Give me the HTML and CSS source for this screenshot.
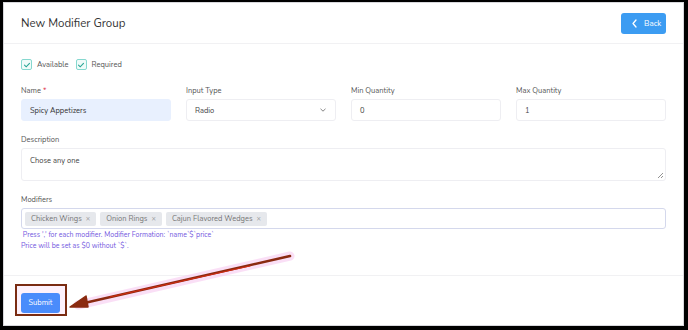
FILE: index.html
```html
<!DOCTYPE html>
<html lang="en">
<head>
    <meta charset="UTF-8">
    <meta name="viewport" content="width=device-width, initial-scale=1.0">
    <title>New Modifier Group</title>
    <link rel="stylesheet" href="styles.css">
</head>
<body>
    <div class="frame">
        <div class="card">
            <div class="card-header">
                <h1>New Modifier Group</h1>
                <button type="button" class="btn-back">
                    <svg width="7" height="9" viewBox="0 0 7 9"><path d="M5 1 L2 4.5 L5 8" fill="none" stroke="#fff" stroke-width="1.3" stroke-linecap="round" stroke-linejoin="round"/></svg>
                    Back
                </button>
            </div>

            <div class="card-body">
                <div class="checks">
                    <label class="check"><span class="box"><svg width="8" height="8" viewBox="0 0 8 8"><path d="M1.5 4.2 L3.2 5.8 L6.5 2.3" fill="none" stroke="#2aa595" stroke-width="1.1" stroke-linecap="round"/></svg></span>Available</label>
                    <label class="check"><span class="box"><svg width="8" height="8" viewBox="0 0 8 8"><path d="M1.5 4.2 L3.2 5.8 L6.5 2.3" fill="none" stroke="#2aa595" stroke-width="1.1" stroke-linecap="round"/></svg></span>Required</label>
                </div>

                <div class="row">
                    <div class="field">
                        <label>Name <span class="req">*</span></label>
                        <div class="input filled">Spicy Appetizers</div>
                    </div>
                    <div class="field">
                        <label>Input Type</label>
                        <div class="input select">Radio
                            <svg width="8" height="6" viewBox="0 0 8 6"><path d="M1.5 1.8 L4 4.2 L6.5 1.8" fill="none" stroke="#777" stroke-width="0.9"/></svg>
                        </div>
                    </div>
                    <div class="field">
                        <label>Min Quantity</label>
                        <div class="input">0</div>
                    </div>
                    <div class="field">
                        <label>Max Quantity</label>
                        <div class="input">1</div>
                    </div>
                </div>

                <div class="field wide">
                    <label>Description</label>
                    <div class="input textarea">Chose any one
                        <svg class="grip" width="7" height="7" viewBox="0 0 7 7"><path d="M6 1 L1 6 M6 4 L4 6" stroke="#777" stroke-width="0.8"/></svg>
                    </div>
                </div>

                <div class="field wide mods">
                    <label>Modifiers</label>
                    <div class="input tags">
                        <span class="tag">Chicken Wings <i>&times;</i></span>
                        <span class="tag">Onion Rings <i>&times;</i></span>
                        <span class="tag">Cajun Flavored Wedges <i>&times;</i></span>
                    </div>
                    <p class="hint">&nbsp;Press ',' for each modifier. Modifier Formation: `name`$`price`</p>
                    <p class="hint">Price will be set as $0 without `$`.</p>
                </div>
            </div>

            <div class="card-footer">
                <div class="mark">
                    <button type="button" class="btn-submit">Submit</button>
                </div>
            </div>

            <!-- annotation arrow drawn over the page -->
            <svg class="arrow" width="688" height="330" viewBox="0 0 688 330">
                <path d="M290 256 L78 305" stroke="#f7c6f0" stroke-width="9" opacity="0.55" stroke-linecap="round"/>
                <path d="M290 256 L80 304" stroke="#8a2a10" stroke-width="2.6" stroke-linecap="round"/>
                <path d="M250 266 L110 297" stroke="#d42a10" stroke-width="1" stroke-linecap="round"/>
                <path d="M70 307 L86 296 L88 307 Z" fill="#8a2a10" stroke="#8a2a10" stroke-width="1.5" stroke-linejoin="round"/>
            </svg>
        </div>
    </div>
</body>
</html>
```

FILE: styles.css
```css
/* Reset */
body, h1, p, button {
    margin: 0;
    padding: 0;
}

body {
    width: 688px;
    height: 330px;
    background: #000;
    font-family: "Nunito", "Lato", sans-serif;
    overflow: hidden;
}

.frame {
    margin: 2px 4px 0 3px;
    height: 324px;
    background: #fff;
    border: 1px solid #d8d8dc;
    box-sizing: border-box;
}

.card {
    position: relative;
    height: 100%;
}

.card-header {
    display: flex;
    justify-content: space-between;
    align-items: center;
    height: 40px;
    padding: 0 17px 0 17px;
    border-bottom: 1px solid #f1f1f3;
}

h1 {
    font-size: 11.5px;
    font-weight: 400;
    color: #333;
    margin-top: -1px;
}

.btn-back {
    display: flex;
    align-items: center;
    gap: 6px;
    width: 45px;
    height: 21px;
    padding-left: 10px;
    border: none;
    border-radius: 3px;
    background: #3c9cf2;
    color: #fff;
    font-family: inherit;
    font-size: 8px;
    margin-top: 1px;
}

.card-body {
    padding: 15px 17px 0 17px;
    height: 232px;
    box-sizing: border-box;
    border-bottom: 1px solid #f1f1f3;
}

.checks {
    display: flex;
    gap: 7px;
    font-size: 7.5px;
    color: #555;
    margin-bottom: 15px;
}

.check {
    display: flex;
    align-items: center;
    gap: 5px;
}

.box {
    display: flex;
    align-items: center;
    justify-content: center;
    width: 9px;
    height: 9px;
    border: 1px solid #86d8cf;
    border-radius: 2px;
    background: #f0fbf9;
}

.row {
    display: grid;
    grid-template-columns: repeat(4, 150px);
    column-gap: 15px;
}

.field label {
    display: block;
    font-size: 7.5px;
    color: #555;
    margin-bottom: 3px;
}

.req {
    color: #e04050;
}

.input {
    position: relative;
    display: flex;
    align-items: center;
    height: 22px;
    box-sizing: border-box;
    padding: 0 8px;
    border: 1px solid #eeeef2;
    border-radius: 3px;
    font-size: 7.5px;
    color: #444;
}

.input.filled {
    background: #e8f0fe;
    border-color: #e8f0fe;
    color: #333;
}

.input.select {
    justify-content: space-between;
}

.wide {
    margin-top: 13px;
}

.input.textarea {
    height: 33px;
    align-items: flex-start;
    padding-top: 6px;
}

.grip {
    position: absolute;
    right: 1px;
    bottom: 1px;
}

.mods {
    margin-top: 13px;
}

.input.tags {
    height: 21px;
    padding: 0 3px;
    gap: 4px;
    border-color: #d4d8ec;
}

.tag {
    display: flex;
    align-items: center;
    gap: 4px;
    height: 14px;
    padding: 0 6px;
    border-radius: 2px;
    background: #e6e8ec;
    color: #777;
    font-size: 7.5px;
}

.tag i {
    font-style: normal;
    color: #999;
}

.hint {
    font-size: 7px;
    color: #7357e0;
    line-height: 11px;
}

.card-footer {
    padding: 8px 0 0 11px;
}

.mark {
    padding: 3px 0 0 4px;
    border: 2px solid #7a2c12;
    background: #fdf1fb;
    width: 44px;
    height: 25px;
}

.btn-submit {
    width: 39px;
    height: 20px;
    border: none;
    border-radius: 3px;
    background: #4a8cfb;
    color: #fff;
    font-family: inherit;
    font-size: 7.5px;
}

.arrow {
    position: absolute;
    left: -4px;
    top: -3px;
    pointer-events: none;
}
```
